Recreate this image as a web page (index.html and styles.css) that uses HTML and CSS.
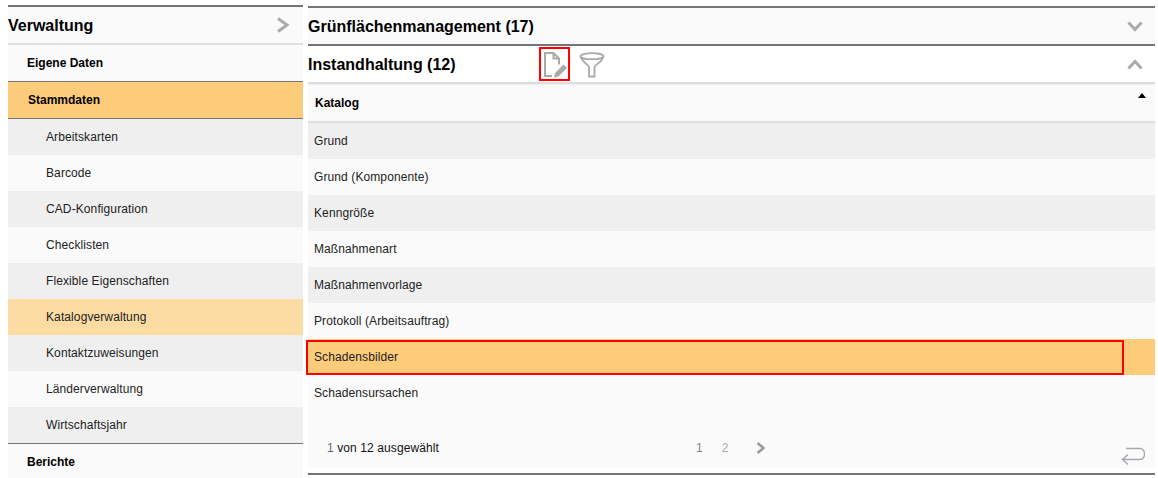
FILE: index.html
```html
<!DOCTYPE html>
<html lang="de">
<head>
<meta charset="utf-8">
<title>Verwaltung</title>
<link rel="stylesheet" href="styles.css">
</head>
<body>
<div class="page">
  <aside class="sidebar">
    <div class="side-head">
      <span class="side-title">Verwaltung</span>
      <svg class="side-chev" width="14" height="16" viewBox="0 0 14 16"><path d="M2 1.5 L11 8 L2 14.5" fill="none" stroke="#aaa" stroke-width="3"/></svg>
    </div>
    <div class="side-top">Eigene Daten</div>
    <div class="side-top active">Stammdaten</div>
    <div class="side-sub alt">Arbeitskarten</div>
    <div class="side-sub">Barcode</div>
    <div class="side-sub alt">CAD-Konfiguration</div>
    <div class="side-sub">Checklisten</div>
    <div class="side-sub alt">Flexible Eigenschaften</div>
    <div class="side-sub current">Katalogverwaltung</div>
    <div class="side-sub alt">Kontaktzuweisungen</div>
    <div class="side-sub">Länderverwaltung</div>
    <div class="side-sub alt">Wirtschaftsjahr</div>
    <div class="side-top last">Berichte</div>
  </aside>
  <main class="content">
    <section class="acc-head collapsed">
      <h2>Grünflächenmanagement (17)</h2>
      <svg class="acc-chev" width="16" height="11" viewBox="0 0 16 11"><path d="M1.5 1.5 L8 8.5 L14.5 1.5" fill="none" stroke="#aaa" stroke-width="3"/></svg>
    </section>
    <section class="acc-head open">
      <h2>Instandhaltung (12)</h2>
      <div class="tools">
        <span class="tool-edit">
          <svg width="27" height="27" viewBox="0 0 27 27">
            <path d="M11 25 H4 V2 H12.5 L18 7.5 V13.5 M12.5 2 V7.5 H18" fill="none" stroke="#aaa" stroke-width="2"/>
            <path d="M13 26.5 L14 22 L22.5 13.5 L26 17 L17.5 25.5 Z" fill="#aaa"/>
          </svg>
        </span>
        <svg class="tool-filter" width="26" height="26" viewBox="0 0 26 26">
          <ellipse cx="13" cy="4.2" rx="11.5" ry="3" fill="none" stroke="#aaa" stroke-width="1.8"/>
          <path d="M1.5 4.5 C3 10 9 12 10 15 V24.5 H15.5 V15 C17 12 23 10 24.5 4.5" fill="none" stroke="#aaa" stroke-width="1.8"/>
        </svg>
      </div>
      <svg class="acc-chev" width="16" height="11" viewBox="0 0 16 11"><path d="M1.5 9.5 L8 2.5 L14.5 9.5" fill="none" stroke="#aaa" stroke-width="3"/></svg>
    </section>
    <div class="table-wrap">
      <div class="table-head">
        <span>Katalog</span>
        <span class="sort"></span>
      </div>
      <div class="row alt">Grund</div>
      <div class="row">Grund (Komponente)</div>
      <div class="row alt">Kenngröße</div>
      <div class="row">Maßnahmenart</div>
      <div class="row alt">Maßnahmenvorlage</div>
      <div class="row">Protokoll (Arbeitsauftrag)</div>
      <div class="row selected">Schadensbilder<span class="mark-row"></span></div>
      <div class="row">Schadensursachen</div>
      <div class="footer">
        <div class="count"><span class="count-num">1</span> von 12 ausgewählt</div>
        <div class="pager">
          <span>1</span><span class="page-two">2</span>
          <svg class="pager-next" width="10" height="12" viewBox="0 0 10 12"><path d="M1.5 1 L7.5 6 L1.5 11" fill="none" stroke="#999" stroke-width="2.4"/></svg>
        </div>
        <svg class="back" width="24" height="19" viewBox="0 0 24 19"><path d="M5 2.5 H19 C25 2.5 25 13.5 19 13.5 H2 M7 8.5 L1.5 13.5 L7 18.5" fill="none" stroke="#a5a9ad" stroke-width="1.4"/></svg>
      </div>
    </div>
    <div class="bottom-rule"></div>
  </main>
</div>
</body>
</html>
```
FILE: styles.css
```css
* { box-sizing: border-box; }
html, body { margin: 0; padding: 0; background: #fff; }
body {
  font-family: "Liberation Sans", Arial, sans-serif;
  font-size: 12px;
  letter-spacing: 0.1px;
  color: #111;
  overflow: hidden;
}
.page {
  display: flex;
  gap: 5px;
  width: 1158px;
  height: 478px;
  padding: 5px 3px 0 8px;
  overflow: hidden;
}
.sidebar {
  flex: 0 0 295px;
  background: #fafafa;
  border-top: 2px solid #757575;
}
.side-head {
  display: flex;
  align-items: center;
  justify-content: space-between;
  height: 38px;
  padding-right: 13px;
  border-bottom: 2px solid #e0e0e0;
  font-size: 16px;
  font-weight: bold;
  letter-spacing: 0;
  color: #000;
}
.side-title { padding-top: 2px; }
.side-chev { display: block; }
.side-top {
  display: flex;
  align-items: center;
  height: 37px;
  padding-left: 19px;
  border-bottom: 1px solid #757575;
  font-weight: bold;
  letter-spacing: 0;
  color: #000;
}
.side-top.active {
  background: #fdcc7b;
  padding-left: 20px;
}
.side-top.last { border-bottom: 0; height: 34px; padding-top: 2px; }
.side-sub {
  display: flex;
  align-items: center;
  height: 36px;
  padding-left: 38px;
  color: #222;
}
.side-sub.alt { background: #efefef; }
.side-sub.current { background: #fddca3; }
.side-sub:nth-last-child(2) { border-bottom: 1px solid #757575; height: 37px; }
.content {
  flex: 1;
  margin-top: 1px;
  display: flex;
  flex-direction: column;
  min-width: 0;
}
.acc-head {
  display: flex;
  align-items: center;
  height: 38px;
  border-top: 2px solid #757575;
  padding-right: 12px;
}
.acc-head.collapsed { background: #fafafa; }
.acc-head.open { background: #fff; }
.acc-head h2 {
  margin: 0;
  padding-top: 2px;
  font-size: 16px;
  font-weight: bold;
  letter-spacing: 0;
  color: #000;
}
.acc-head .acc-chev { margin-left: auto; }
.tools {
  display: flex;
  align-items: center;
  gap: 9px;
  margin-left: 83px;
}
.tool-edit {
  display: flex;
  align-items: center;
  justify-content: center;
  width: 31px;
  height: 34px;
  border: 2px solid #f00;
}
.tool-filter { display: block; margin-top: 1px; }
.table-wrap {
  background: #fafafa;
  border-top: 2px solid #ddd;
  position: relative;
  height: 386px;
}
.table-head {
  display: flex;
  align-items: center;
  justify-content: space-between;
  height: 39px;
  padding: 0 9px 0 7px;
  border-top: 1px solid #f0f0f0;
  border-bottom: 2px solid #e0e0e0;
  font-weight: bold;
  letter-spacing: 0;
  color: #000;
}
.sort {
  width: 0;
  height: 0;
  margin-top: -16px;
  border-left: 4px solid transparent;
  border-right: 4px solid transparent;
  border-bottom: 5px solid #000;
}
.row {
  display: flex;
  align-items: center;
  height: 36px;
  padding-left: 6px;
  color: #222;
}
.row.alt { background: #efefef; }
.row.selected { background: #fdcc7b; position: relative; }
.mark-row {
  position: absolute;
  left: -2px;
  top: 1px;
  width: 818px;
  height: 35px;
  border: 2px solid #f00;
}
.footer {
  position: relative;
  display: flex;
  align-items: center;
  height: 57px;
  padding: 17px 0 0 19px;
}
.count { width: 369px; }
.count-num { color: #667; }
.pager {
  display: flex;
  align-items: center;
  color: #888;
}
.page-two { margin-left: 19px; color: #aaa; }
.pager-next { margin-left: 27px; }
.back {
  position: absolute;
  right: 10px;
  bottom: 3px;
}
.bottom-rule {
  margin-top: 5px;
  border-top: 2px solid #757575;
}
```
